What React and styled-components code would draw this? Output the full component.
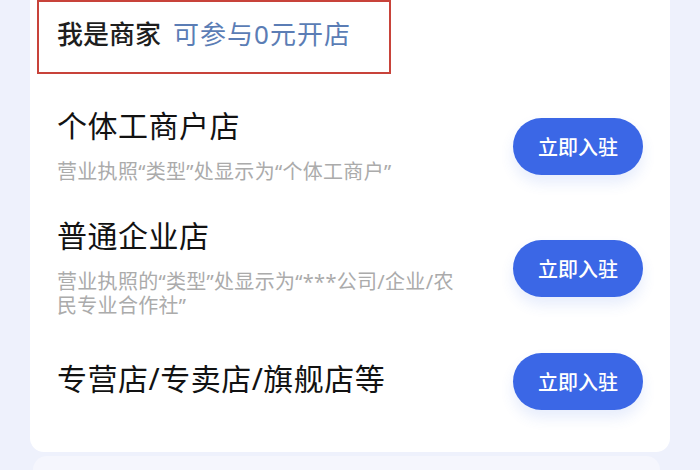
import styled, { createGlobalStyle } from 'styled-components';

const GlobalStyle = createGlobalStyle`
  html, body {
    margin: 0;
    padding: 0;
    background: #eef1fc;
  }
  body {
    font-family: "Noto Sans", "Noto Sans CJK SC", sans-serif;
  }
`;

const shops = [
  {
    title: '个体工商户店',
    desc: '营业执照“类型”处显示为“个体工商户”',
  },
  {
    title: '普通企业店',
    desc: '营业执照的“类型”处显示为“***公司/企业/农民专业合作社”',
  },
  {
    title: '专营店/专卖店/旗舰店等',
  },
];

export default function App() {
  return (
    <>
      <GlobalStyle />
      <Page>
        <Card>
          <Header>
            <HeaderTitle>我是商家</HeaderTitle>
            <HeaderHint>可参与0元开店</HeaderHint>
          </Header>
          {shops.map((shop) => (
            <Row key={shop.title}>
              <Info>
                <Title>{shop.title}</Title>
                {shop.desc && <Desc>{shop.desc}</Desc>}
              </Info>
              <JoinButton>立即入驻</JoinButton>
            </Row>
          ))}
        </Card>
        <NextCard />
      </Page>
    </>
  );
}

const Page = styled.div`
  width: 700px;
  height: 470px;
  overflow: hidden;
  padding-left: 30px;
  box-sizing: border-box;
`;

const Card = styled.div`
  width: 640px;
  height: 452px;
  box-sizing: border-box;
  background: #ffffff;
  border-radius: 0 0 14px 14px;
  display: flex;
  flex-direction: column;
  gap: 34px;
  padding: 0 27px 0 0;
`;

const Header = styled.div`
  width: 354px;
  height: 74px;
  margin-left: 7px;
  box-sizing: border-box;
  border: 2px solid #c8433a;
  display: flex;
  align-items: center;
  padding: 0 0 8px 18px;
`;

const HeaderTitle = styled.span`
  color: #1e1e1e;
  font-size: 26px;
  font-weight: 500;
`;

const HeaderHint = styled.span`
  color: #5b7db5;
  font-size: 26px;
  letter-spacing: 1px;
  margin-left: 12px;
`;

const Row = styled.div`
  display: flex;
  align-items: center;
  justify-content: space-between;
  padding-left: 27px;
  min-height: 58px;
`;

const Info = styled.div`
  display: flex;
  flex-direction: column;
  gap: 12px;
`;

const Title = styled.div`
  font-size: 30px;
  line-height: 36px;
  letter-spacing: 0.5px;
  color: #121212;
  padding-bottom: 4px;
`;

const Desc = styled.div`
  max-width: 400px;
  font-size: 20px;
  line-height: 24px;
  letter-spacing: 0.3px;
  color: #ababab;
`;

const JoinButton = styled.button`
  width: 130px;
  height: 57px;
  border: none;
  border-radius: 29px;
  background: #3b67e6;
  color: #ffffff;
  font-family: inherit;
  font-size: 20px;
  font-weight: 500;
  box-shadow: 0 8px 14px rgba(59, 103, 230, 0.12);
  flex-shrink: 0;
`;

const NextCard = styled.div`
  width: 627px;
  height: 30px;
  margin: 4px 0 0 3px;
  background: #f5f6fd;
  border-radius: 14px 14px 0 0;
`;
